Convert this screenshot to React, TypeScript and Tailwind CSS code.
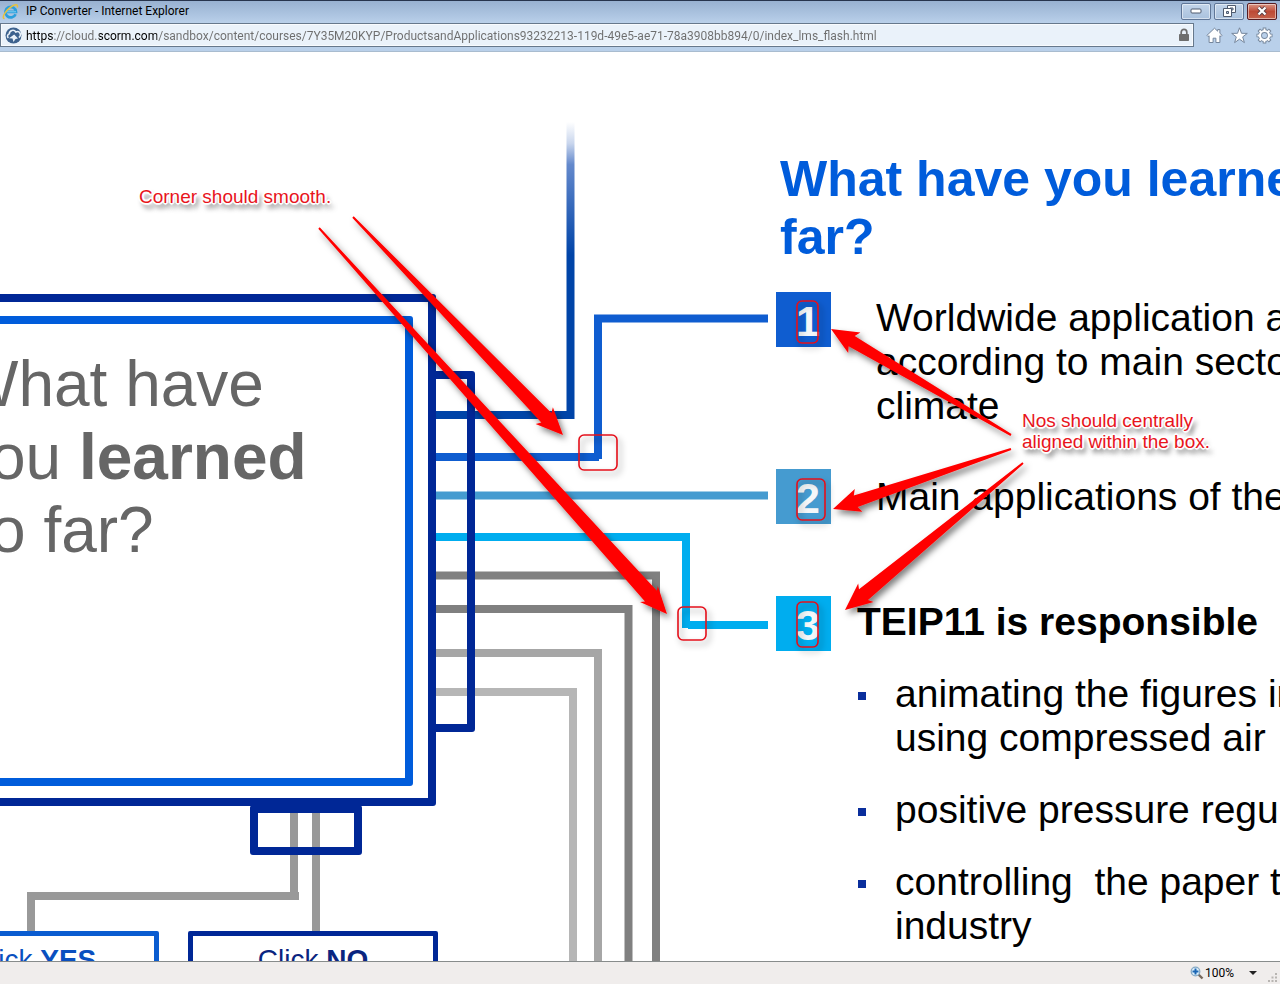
import React from "react";

type Point = [number, number];

/** Builds a tapered arrow outline running from a thin tail to a barbed head. */
function arrowPoints([x1, y1]: Point, [x2, y2]: Point, half: number): string {
  const length = Math.hypot(x2 - x1, y2 - y1);
  const dx = (x2 - x1) / length;
  const dy = (y2 - y1) / length;
  const at = (back: number, side: number) =>
    `${(x2 - dx * back - dy * side).toFixed(1)},${(y2 - dy * back + dx * side).toFixed(1)}`;
  return [
    at(length, 1),
    at(24, half),
    at(27, 12),
    at(0, 0),
    at(27, -12),
    at(24, -half),
    at(length, -1),
  ].join(" ");
}

const arrows: { tail: Point; tip: Point; half: number }[] = [
  { tail: [353, 217], tip: [563, 435], half: 7 },
  { tail: [319, 228], tip: [667, 614], half: 8 },
  { tail: [1011, 435], tip: [831, 329], half: 6 },
  { tail: [1011, 449], tip: [833, 509], half: 6 },
  { tail: [1023, 463], tip: [845, 610], half: 7 },
];

const marks = [
  { x: 579, y: 435, width: 38, height: 35, r: 5 },
  { x: 678, y: 607, width: 28, height: 33, r: 5 },
  { x: 797, y: 301, width: 21, height: 42, r: 5 },
  { x: 797, y: 479, width: 28, height: 41, r: 5 },
  { x: 797, y: 602, width: 21, height: 45, r: 5 },
];

function Connectors() {
  return (
    <svg className="pointer-events-none absolute top-0 left-0" width="1280" height="909" viewBox="0 52 1280 909" aria-hidden="true">
      <defs>
        <linearGradient id="fade" x1="0" y1="122" x2="0" y2="255" gradientUnits="userSpaceOnUse">
          <stop offset="0" stopColor="#ffffff" />
          <stop offset="0.16" stopColor="#c9d6ed" />
          <stop offset="0.32" stopColor="#6489cc" />
          <stop offset="1" stopColor="#0044a8" />
        </linearGradient>
      </defs>
      <rect x="566.5" y="122" width="8" height="297" fill="url(#fade)" />
      <path d="M436 411H567V419H436Z" fill="#0044a8" />
      <path d="M436 453H594V314.5H768V322.5H602V459H599V461H436Z" fill="#0f5dd0" />
      <path d="M436 491.5H768V499.5H436Z" fill="#459bd0" />
      <path d="M436 533H690V621H768V629H688V628H682V541H436Z" fill="#00adef" />
      <path d="M436 575.5H656V961" fill="none" stroke="#808080" strokeWidth="8" />
      <path d="M436 609H628.500V961" fill="none" stroke="#808080" strokeWidth="8" />
      <path d="M436 653H598V961" fill="none" stroke="#a6a6a6" strokeWidth="8" />
      <path d="M436 692H573V961" fill="none" stroke="#b6b6b6" strokeWidth="8" />
      <path d="M294 806V900M299 896H31V934M316 806V934" fill="none" stroke="#999999" strokeWidth="8" />
    </svg>
  );
}

function Annotations() {
  return (
    <svg className="pointer-events-none absolute top-0 left-0" width="1280" height="909" viewBox="0 52 1280 909" aria-hidden="true">
      <defs>
        <filter id="shade" x="0" y="52" width="1280" height="909" filterUnits="userSpaceOnUse">
          <feDropShadow dx="3" dy="4" stdDeviation="3" floodColor="#000000" floodOpacity="0.5" />
        </filter>
        <filter id="soft" x="0" y="52" width="1280" height="909" filterUnits="userSpaceOnUse">
          <feDropShadow dx="3" dy="4" stdDeviation="3" floodColor="#000000" floodOpacity="0.4" />
        </filter>
      </defs>
      <g filter="url(#soft)" fill="none" stroke="#e4101a" strokeWidth="1.6">
        {marks.map((m) => (
          <rect key={`${m.x}-${m.y}`} x={m.x} y={m.y} width={m.width} height={m.height} rx={m.r} />
        ))}
      </g>
      <g filter="url(#shade)" fill="#ff0000">
        {arrows.map((a) => (
          <polygon key={a.tip.join()} points={arrowPoints(a.tail, a.tip, a.half)} />
        ))}
      </g>
    </svg>
  );
}

function ExplorerIcon() {
  return (
    <svg width="17" height="17" viewBox="0 0 17 17" aria-hidden="true">
      <path d="M13.600 11.200A5.300 5.300 0 1 1 14 8.800H5" fill="none" stroke="#2b9fdc" strokeWidth="2.700" />
      <path d="M4.200 8.800H14" stroke="#7fd0f2" strokeWidth="1" />
      <path d="M2.600 15.600C-.8 15.600 2.800 8.300 8 4.600 12.400 1.300 16.600.6 15.300 4.600" fill="none" stroke="#e9c23b" strokeWidth="1.500" />
    </svg>
  );
}

function SiteIcon() {
  return (
    <svg width="17" height="17" viewBox="0 0 17 17" aria-hidden="true">
      <circle cx="8.500" cy="8.500" r="8" fill="#3d628e" />
      <path d="M3.400 11A2.500 2.500 0 0 1 4.300 6.700 3.500 3.500 0 0 1 10.800 5 3 3 0 0 1 13.800 10.500" fill="none" stroke="#e9f1f8" strokeWidth="1.600" />
      <path d="M4 11.200L9.200 7.400 13 11.500 10.500 12 8.500 15 7.500 11.500Z" fill="#e9f1f8" />
    </svg>
  );
}

function BrowserChrome() {
  const frame = "flex h-[17px] w-[30px] items-center justify-center rounded-[2px] border shadow-[inset_0_0_0_1px_rgba(255,255,255,0.5)]";
  return (
    <header className="shrink-0 border-t border-[#27344d] bg-[#b9d0ea]">
      <div className="flex h-[22px] items-center bg-linear-to-b from-[#98b1d1] to-[#b9d0ea] pr-[3px] pb-[2px] pl-[2px]">
        <ExplorerIcon />
        <h1 className="ml-[7px] flex-1 text-[12px] leading-4 text-black">IP Converter - Internet Explorer</h1>
        <div className="flex gap-[3px]">
          <button type="button" aria-label="Minimize" className={`${frame} border-[#5f7697] bg-linear-to-b from-[#c3d5ea] to-[#a9c1dd]`}>
            <svg width="12" height="6" viewBox="0 0 12 6"><rect x="1" y="1" width="10" height="4" rx="1" fill="#fff" stroke="#4f5b6e" /></svg>
          </button>
          <button type="button" aria-label="Restore" className={`${frame} border-[#5f7697] bg-linear-to-b from-[#c3d5ea] to-[#a9c1dd]`}>
            <svg width="13" height="12" viewBox="0 0 13 12" fill="#fff" stroke="#4f5b6e">
              <path d="M4.500.5H12.500V7.500H4.500Z" />
              <path d="M7 3H10V5H7Z" fill="#b5c9e2" />
              <path d="M.5 3.500H8.500V11.500H.5Z" />
              <path d="M3.500 6.500H5.500V8.500H3.500Z" fill="#b5c9e2" />
            </svg>
          </button>
          <button type="button" aria-label="Close" className={`${frame} border-[#571d22] bg-linear-to-b from-[#d99584] via-[#bd4a36] to-[#c5624b]`}>
            <svg width="12" height="10" viewBox="0 0 12 10">
              <path d="M2.500 1.500L9.500 8.500M9.500 1.500L2.500 8.500" stroke="#5b4046" strokeWidth="4" /><path d="M2.500 1.500L9.500 8.500M9.500 1.500L2.500 8.500" stroke="#fff" strokeWidth="2.200" />
            </svg>
          </button>
        </div>
      </div>
      <div className="flex items-center border-b border-[#a9bccf] pr-[7px] pb-[4px]">
        <div className="flex h-6 flex-1 items-center border border-[#66788c] bg-[#eaf2fa] pr-[3px] pl-[4px] shadow-[inset_0_0_0_1px_#f8fbfe]">
          <SiteIcon />
          <input
            aria-label="Address"
            type="text"
            readOnly
            value="https://cloud.scorm.com/sandbox/content/courses/7Y35M20KYP/ProductsandApplications93232213-119d-49e5-ae71-78a3908bb894/0/index_lms_flash.html"
            className="ml-[4px] h-5 min-w-0 flex-1 bg-[linear-gradient(to_right,#000_28px,#6d6d6d_28px,#6d6d6d_73px,#000_73px,#000_131px,#6d6d6d_131px)] bg-clip-text pt-px text-[12px] leading-5 text-transparent outline-none"
          />
          <svg width="12" height="14" viewBox="0 0 12 14" aria-hidden="true">
            <path d="M3.200 7V4.200a2.800 2.800 0 0 1 5.600 0V7" fill="none" stroke="#6e6e6e" strokeWidth="1.700" />
            <rect x="1" y="6" width="10" height="7" rx="0.800" fill="#6e6e6e" />
          </svg>
        </div>
        <div className="ml-[12px] flex gap-[8px]">
          <button type="button" aria-label="Home">
            <svg className="block" width="17" height="17" viewBox="0 0 17 17" fill="#fff" stroke="#75869c" strokeLinejoin="round">
              <path d="M8.500 1.200L.9 8.400l1.200 1.200 1-.9v6.800h4v-4.300h2.800v4.300h4V8.700l1 .9 1.200-1.200-2.200-2.100V2.500h-2.200v1.700Z" />
            </svg>
          </button>
          <button type="button" aria-label="Favorites">
            <svg className="block" width="17" height="17" viewBox="0 0 17 17" fill="#fff" stroke="#75869c" strokeLinejoin="round">
              <path d="M8.500.8l2 5.500 5.800.1-4.600 3.500 1.700 5.700-4.900-3.400-4.900 3.400 1.700-5.700L.7 6.400l5.800-.1Z" />
            </svg>
          </button>
          <button type="button" aria-label="Tools">
            <svg className="block" width="17" height="17" viewBox="0 0 17 17" fill="none">
              <circle cx="8.500" cy="8.500" r="4.500" stroke="#75869c" strokeWidth="4" />
              <path d="M8.500.5V4M8.500 13V16.500M.5 8.500H4M13 8.500H16.500M2.800 2.800L5 5M12 12L14.200 14.200M14.200 2.800L12 5M5 12L2.800 14.200" stroke="#75869c" strokeWidth="3.600" />
              <circle cx="8.500" cy="8.500" r="4.500" stroke="#fff" strokeWidth="2.200" />
              <path d="M8.500 1.400V4M8.500 13V15.600M1.400 8.500H4M13 8.500H15.600M3.500 3.500L5 5M12 12L13.500 13.500M13.500 3.500L12 5M5 12L3.500 13.500" stroke="#fff" strokeWidth="1.800" />
            </svg>
          </button>
        </div>
      </div>
    </header>
  );
}

function Screen() {
  return (
    <section className="relative w-[776px] shrink-0 pt-[242px]">
      <div className="-ml-[60px] flex items-start">
        <div className="h-[512px] w-[496px] rounded-[3px] border-8 border-[#002796] pt-[14px] pr-[15px] pb-3 pl-4">
          <div className="h-full rounded-[3px] border-8 border-[#005cdb] bg-white pt-[24px]">
            <p className="-ml-[14px] text-[64px] leading-[73px] whitespace-nowrap text-[#666666]">
              What have
              <br />
              you <strong>learned</strong>
              <br />
              so far?
            </p>
          </div>
        </div>
        <div className="mt-[77px] -ml-2 h-[361px] w-[47px] rounded-[3px] border-8 border-[#002796]" />
      </div>
      <div className="-mt-px ml-[250px] h-[50px] w-[112px] rounded-[3px] border-8 border-[#002796]" />
      <div className="mt-[76px] -ml-[91px] flex gap-[29px] text-[28px] leading-8">
        <button type="button" className="h-14 w-[250px] rounded-[2px] border-[5px] border-[#0a5cd0] bg-white pt-[2px] text-[#0a50c0]">
          Click <strong>YES</strong>
        </button>
        <button type="button" className="h-14 w-[250px] rounded-[2px] border-[5px] border-[#002796] bg-white pt-[2px] text-[#0a2580]">
          Click <strong>NO</strong>
        </button>
      </div>
    </section>
  );
}

function NumberBox({ value, color }: { value: number; color: string }) {
  return (
    <span className={`h-[55px] w-[55px] shrink-0 pt-[2px] pl-5 text-[43px] leading-[55px] font-bold text-[#f4f7f9] ${color}`}>{value}</span>
  );
}

function Summary() {
  return (
    <article className="relative min-w-0 flex-1 pt-[98px] text-[39px] leading-[44px] whitespace-nowrap text-black">
      <h2 className="pl-[4px] text-[50px] leading-[58px] font-bold text-[#005cdb]">
        What have you learned
        <br />
        far?
      </h2>
      <div className="mt-[26px] flex items-start gap-[45px]">
        <NumberBox value={1} color="bg-[#0f5dd0]" />
        <p className="pt-1">
          Worldwide application a
          <br />
          according to main sector
          <br />
          climate
        </p>
      </div>
      <div className="mt-[41px] flex items-start gap-[45px]">
        <NumberBox value={2} color="bg-[#459bd0]" />
        <p className="pt-[6px]">Main applications of the</p>
      </div>
      <div className="mt-[72px] flex items-start gap-[26px]">
        <NumberBox value={3} color="bg-[#00adef]" />
        <h3 className="pt-1 font-bold">TEIP11 is responsible</h3>
      </div>
      <ul className="mt-[21px] flex flex-col gap-[28px] pl-[82px]">
        {["animating the figures in\nusing compressed air", "positive pressure regul", "controlling  the paper t\nindustry"].map((text) => (
          <li key={text} className="flex items-start gap-[29px]">
            <span className="mt-5 h-2 w-2 shrink-0 bg-[#0a2e9c]" />
            <span className="whitespace-pre">{text}</span>
          </li>
        ))}
      </ul>
    </article>
  );
}

function Note({ children, place }: { children: React.ReactNode; place: string }) {
  return (
    <p className={`absolute text-[19px] leading-[21px] whitespace-nowrap text-[#e8141c] [text-shadow:-1px_-1px_0_#fff,1px_-1px_0_#fff,-1px_1px_0_#fff,1px_1px_0_#fff,-2px_0_1px_#fff,2px_0_1px_#fff,0_2px_1px_#fff,0_-2px_1px_#fff,3px_5px_5px_#444] ${place}`}>
      {children}
    </p>
  );
}

function StatusBar() {
  return (
    <footer className="flex h-[23px] shrink-0 items-center justify-end border-t border-[#888c8c] bg-[#f0edec]">
      <svg width="14" height="14" viewBox="0 0 14 14" aria-hidden="true">
        <path d="M8.500 8.500L12.500 12.500" stroke="#77695c" strokeWidth="2.400" />
        <circle cx="5.500" cy="5.500" r="4.300" fill="#dff0fb" stroke="#86a9c4" strokeWidth="1.300" />
        <path d="M5.500 2.500V8.500M2.500 5.500H8.500" stroke="#1b66b4" strokeWidth="2" />
      </svg>
      <button type="button" className="ml-[1px] flex items-center gap-[15px] text-[12px] leading-4 text-black">
        100%
        <svg width="8" height="4" viewBox="0 0 8 4"><path d="M0 0H8L4 4Z" fill="#222" /></svg>
      </button>
      <svg className="mt-[9px] mr-[2px] ml-[11px]" width="10" height="10" viewBox="0 0 10 10" fill="#b8b5b2" aria-hidden="true">
        <path d="M7 0h2v2H7zM7 3.500h2v2H7zM3.500 3.500h2v2h-2zM7 7h2v2H7zM3.500 7h2v2h-2zM0 7h2v2H0z" />
      </svg>
    </footer>
  );
}

export default function App() {
  return (
    <div className="flex h-screen flex-col overflow-hidden bg-white font-['Roboto','Noto_Sans',sans-serif]">
      <BrowserChrome />
      <main className="relative flex min-h-0 flex-1 items-start overflow-hidden bg-white font-['Liberation_Sans',Arial,sans-serif]">
        <Connectors />
        <Screen />
        <Summary />
        <Annotations />
        <Note place="top-[134px] left-[139px]">Corner should smooth.</Note>
        <Note place="top-[358px] left-[1022px]">
          Nos should centrally
          <br />
          aligned within the box.
        </Note>
      </main>
      <StatusBar />
    </div>
  );
}
